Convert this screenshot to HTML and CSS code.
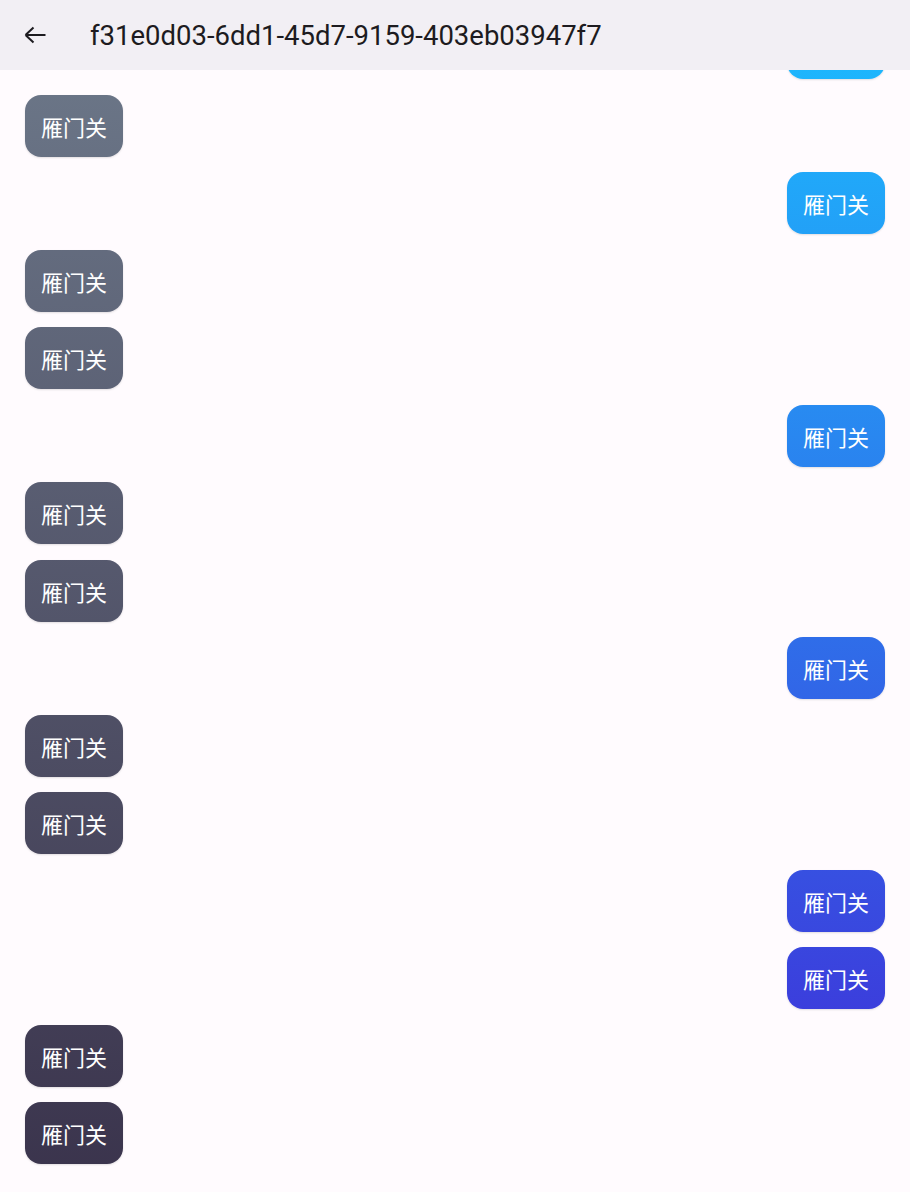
FILE: index.html
```html
<!DOCTYPE html>
<html lang="zh">
<head>
<meta charset="utf-8">
<title>Chat</title>
<link rel="stylesheet" href="styles.css">
</head>
<body>
<header class="appbar">
  <button class="back" aria-label="Back">
    <svg viewBox="0 0 24 24" width="24" height="24"><path d="M22.5 12H2.5M2.5 12L10.5 4.5M2.5 12L10.5 19.5" fill="none" stroke="#1d1b20" stroke-width="2" stroke-linecap="butt"/></svg>
  </button>
  <h1 class="title">f31e0d03-6dd1-45d7-9159-403eb03947f7</h1>
</header>
<main class="list">
  <div class="row me"><div class="bubble">雁门关</div></div>
  <div class="row other"><div class="bubble">雁门关</div></div>
  <div class="row me"><div class="bubble">雁门关</div></div>
  <div class="row other"><div class="bubble">雁门关</div></div>
  <div class="row other"><div class="bubble">雁门关</div></div>
  <div class="row me"><div class="bubble">雁门关</div></div>
  <div class="row other"><div class="bubble">雁门关</div></div>
  <div class="row other"><div class="bubble">雁门关</div></div>
  <div class="row me"><div class="bubble">雁门关</div></div>
  <div class="row other"><div class="bubble">雁门关</div></div>
  <div class="row other"><div class="bubble">雁门关</div></div>
  <div class="row me"><div class="bubble">雁门关</div></div>
  <div class="row me"><div class="bubble">雁门关</div></div>
  <div class="row other"><div class="bubble">雁门关</div></div>
  <div class="row other"><div class="bubble">雁门关</div></div>
</main>
</body>
</html>
```
FILE: styles.css
```css
html, body {
  margin: 0;
  padding: 0;
}
body {
  background: #fffbfe;
  font-family: Roboto, "Noto Sans CJK SC", sans-serif;
  width: 910px;
  height: 1192px;
  overflow: hidden;
  position: relative;
}
.appbar {
  position: absolute;
  top: 0;
  left: 0;
  right: 0;
  height: 70px;
  background: #f2eff4;
  display: flex;
  align-items: center;
  z-index: 2;
}
.back {
  border: 0;
  background: transparent;
  padding: 0;
  margin: 0 0 0 23px;
  width: 24px;
  height: 24px;
  display: flex;
}
.title {
  margin: 0 0 0 43px;
  font-size: 27.5px;
  font-weight: 400;
  color: #1d1b20;
  letter-spacing: 0;
}
.list {
  display: flex;
  flex-direction: column;
  gap: 15.5px;
  padding: 17px 25px 0;
}
.row {
  display: flex;
}
.row.me {
  justify-content: flex-end;
}
.row.other {
  justify-content: flex-start;
}
.bubble {
  height: 62px;
  padding: 0 16px;
  box-sizing: border-box;
  display: flex;
  align-items: center;
  border-radius: 16px;
  color: #ffffff;
  font-family: "Noto Sans CJK SC", sans-serif;
  font-size: 22px;
  box-shadow: 0 1px 2px rgba(0, 0, 0, 0.12);
  background-attachment: fixed;
}
.me .bubble {
  background-image: linear-gradient(180deg, #1bbeff 0px, #4127d6 1192px);
}
.other .bubble {
  background-image: linear-gradient(180deg, #6e7a8b 0px, #3a334c 1192px);
}
```
